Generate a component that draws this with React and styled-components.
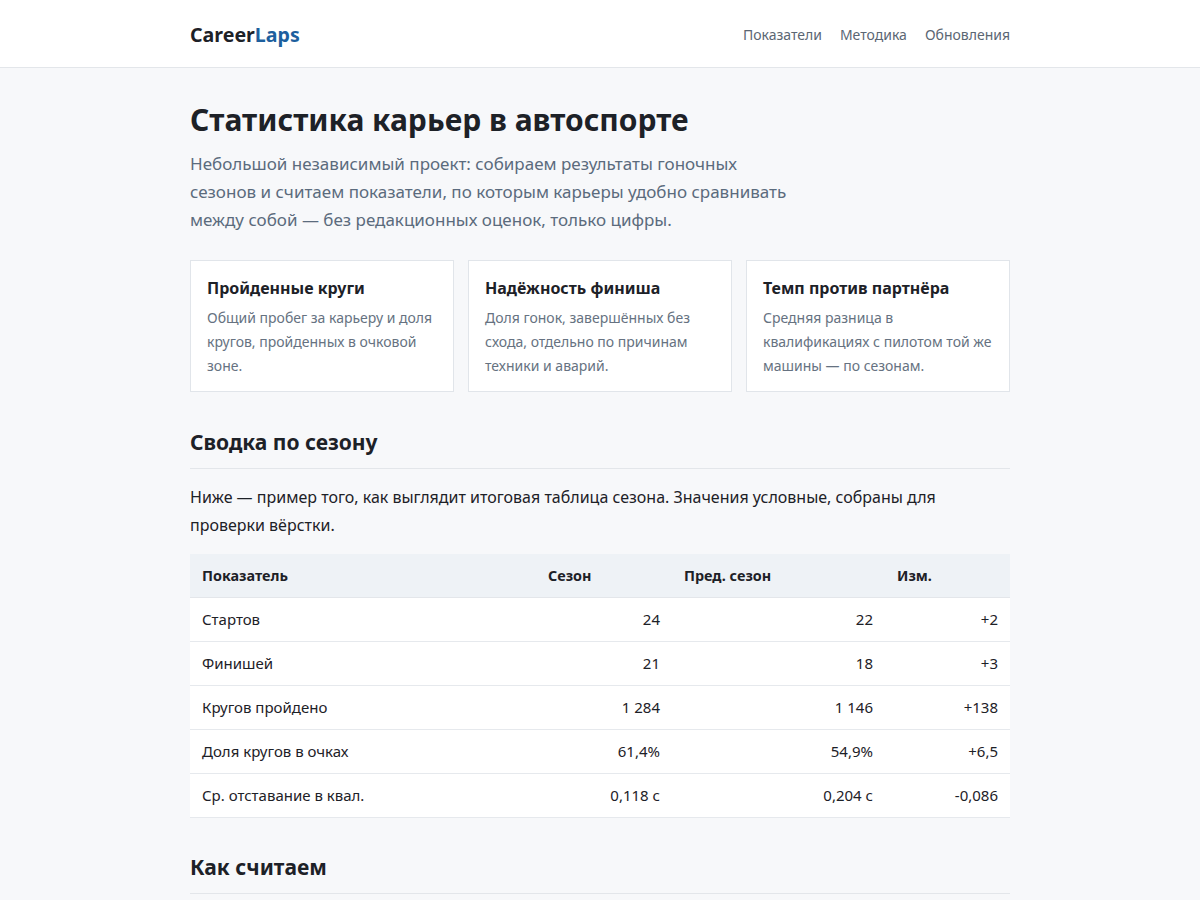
import React from 'react';
import styled, { createGlobalStyle } from 'styled-components';

const GlobalStyle = createGlobalStyle`
  * { box-sizing: border-box; }
  body {
    margin: 0;
    background: #f7f8fa;
    font-family: "Noto Sans", "Open Sans", sans-serif;
    color: #1d2127;
  }
`;

const Header = styled.header`
  background: #ffffff;
  border-bottom: 1px solid #e3e6ea;
  height: 68px;
`;

const Container = styled.div`
  width: 820px;
  margin: 0 auto;
`;

const HeaderInner = styled(Container)`
  height: 100%;
  display: flex;
  align-items: center;
  justify-content: space-between;
  padding-top: 1px;
`;

const Logo = styled.div`
  font-size: 19.6px;
  font-weight: 700;
  color: #1d2127;
  span { color: #1d5f9e; }
`;

const Nav = styled.nav`
  display: flex;
  gap: 18px;
`;

const NavLink = styled.a`
  font-size: 14px;
  color: #5b6673;
  text-decoration: none;
`;

const Main = styled(Container)`
  padding: 32px 0 60px;
`;

const Title = styled.h1`
  margin: 0;
  font-size: 30px;
  line-height: 40px;
  font-weight: 700;
  color: #1d2127;
`;

const Lead = styled.p`
  margin: 10px 0 0;
  max-width: 610px;
  font-size: 17px;
  line-height: 28px;
  color: #5b6b7d;
`;

const Cards = styled.div`
  display: grid;
  grid-template-columns: repeat(3, 1fr);
  gap: 14px;
  margin-top: 26px;
`;

const Card = styled.div`
  background: #ffffff;
  border: 1px solid #e1e5ea;
  padding: 16px 16px 13px;
`;

const CardTitle = styled.h3`
  margin: 0;
  font-size: 16px;
  line-height: 22px;
  font-weight: 700;
`;

const CardText = styled.p`
  margin: 7px 0 0;
  font-size: 14px;
  line-height: 24px;
  color: #667281;
`;

const SectionTitle = styled.h2`
  margin: ${p => p.$top}px 0 0;
  padding-bottom: 11px;
  border-bottom: 1px solid #e3e6ea;
  font-size: 21px;
  line-height: 30px;
  font-weight: 700;
`;

const Text = styled.p`
  margin: 14px 0 0;
  font-size: 16px;
  line-height: 28px;
  color: #1d2127;
`;

const Table = styled.table`
  width: 100%;
  margin-top: 15px;
  border-collapse: collapse;
  background: #ffffff;
`;

const Th = styled.th`
  background: #eef2f6;
  text-align: left;
  font-size: 14.4px;
  font-weight: 700;
  line-height: 19px;
  padding: 12px;
  border-bottom: 1px solid #e3e6ea;
  width: ${p => p.$w}px;
`;

const Td = styled.td`
  font-size: 15px;
  line-height: 19px;
  padding: 12px;
  border-bottom: 1px solid #e6e9ed;
  text-align: ${p => (p.$num ? 'right' : 'left')};
`;

const rows = [
  ['Стартов', '24', '22', '+2'],
  ['Финишей', '21', '18', '+3'],
  ['Кругов пройдено', '1 284', '1 146', '+138'],
  ['Доля кругов в очках', '61,4%', '54,9%', '+6,5'],
  ['Ср. отставание в квал.', '0,118 с', '0,204 с', '-0,086'],
];

const cards = [
  ['Пройденные круги', 'Общий пробег за карьеру и доля кругов, пройденных в очковой зоне.'],
  ['Надёжность финиша', 'Доля гонок, завершённых без схода, отдельно по причинам техники и аварий.'],
  ['Темп против партнёра', 'Средняя разница в квалификациях с пилотом той же машины — по сезонам.'],
];

export default function App() {
  return (
    <>
      <GlobalStyle />
      <Header>
        <HeaderInner>
          <Logo>Career<span>Laps</span></Logo>
          <Nav>
            <NavLink href="#">Показатели</NavLink>
            <NavLink href="#">Методика</NavLink>
            <NavLink href="#">Обновления</NavLink>
          </Nav>
        </HeaderInner>
      </Header>
      <Main>
        <Title>Статистика карьер в автоспорте</Title>
        <Lead>
          Небольшой независимый проект: собираем результаты гоночных сезонов и считаем
          показатели, по которым карьеры удобно сравнивать между собой — без редакционных
          оценок, только цифры.
        </Lead>
        <Cards>
          {cards.map(([t, d]) => (
            <Card key={t}>
              <CardTitle>{t}</CardTitle>
              <CardText>{d}</CardText>
            </Card>
          ))}
        </Cards>

        <SectionTitle $top={35}>Сводка по сезону</SectionTitle>
        <Text>
          Ниже — пример того, как выглядит итоговая таблица сезона. Значения условные,
          собраны для проверки вёрстки.
        </Text>
        <Table>
          <thead>
            <tr>
              <Th $w={346}>Показатель</Th>
              <Th $w={136}>Сезон</Th>
              <Th $w={213}>Пред. сезон</Th>
              <Th $w={125}>Изм.</Th>
            </tr>
          </thead>
          <tbody>
            {rows.map(r => (
              <tr key={r[0]}>
                <Td>{r[0]}</Td>
                <Td $num>{r[1]}</Td>
                <Td $num>{r[2]}</Td>
                <Td $num>{r[3]}</Td>
              </tr>
            ))}
          </tbody>
        </Table>

        <SectionTitle $top={34}>Как считаем</SectionTitle>
      </Main>
    </>
  );
}
